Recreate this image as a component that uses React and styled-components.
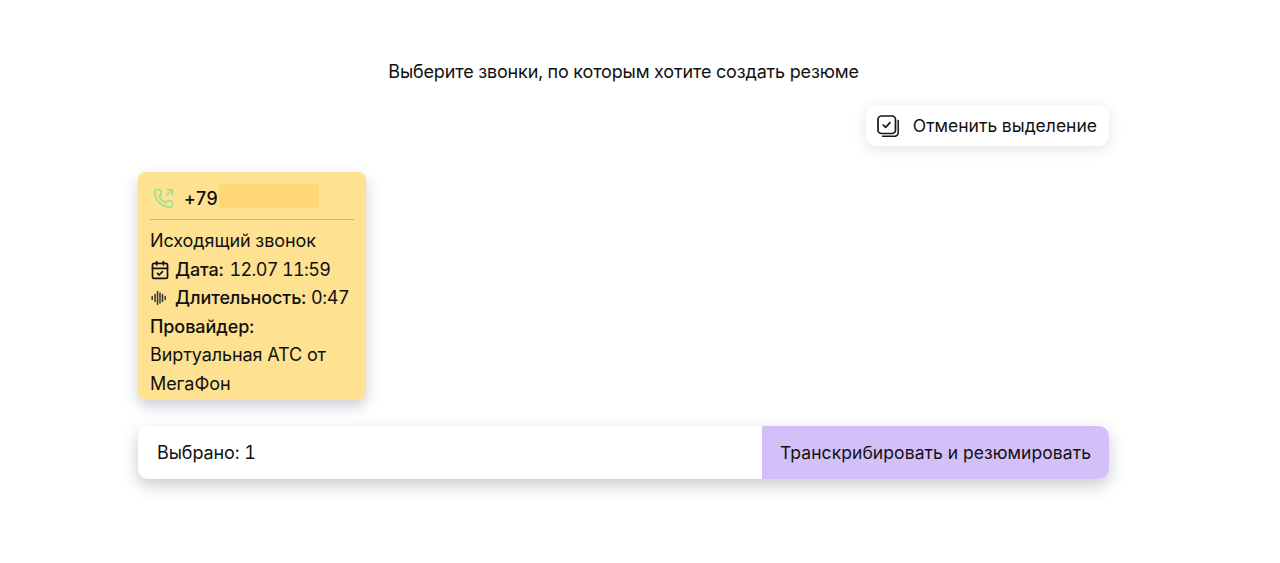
import React from 'react';
import styled, { createGlobalStyle } from 'styled-components';
import { PhoneOutgoing, CalendarCheck } from 'lucide-react';

const GlobalStyle = createGlobalStyle`
  html, body {
    margin: 0;
    background: #fff;
    color: #111;
    font-family: Inter, "Liberation Sans", sans-serif;
    font-variant-numeric: tabular-nums;
  }
`;

const Page = styled.main`
  box-sizing: border-box;
  width: 971px;
  height: 563px;
  margin-left: 138px;
  padding-top: 59px;
  display: flex;
  flex-direction: column;
`;

const Title = styled.h1`
  margin: 0;
  height: 25px;
  font-size: 18px;
  font-weight: 400;
  line-height: 25px;
  text-align: center;
  letter-spacing: -0.15px;
`;

const Toolbar = styled.div`
  display: flex;
  justify-content: flex-end;
  margin-top: 21px;
`;

const DeselectButton = styled.button`
  display: flex;
  align-items: center;
  gap: 13px;
  box-sizing: border-box;
  height: 41px;
  padding: 0 12px 0 10px;
  border: 0;
  border-radius: 10px;
  background: #fff;
  box-shadow: 0 3px 14px rgba(70, 80, 100, 0.16);
  font: inherit;
  font-size: 17.5px;
  color: inherit;
`;

const CallList = styled.section`
  display: flex;
  margin-top: 26px;
`;

const CallCard = styled.article`
  box-sizing: border-box;
  width: 228px;
  height: 228px;
  padding: 12px 12px 0;
  border-radius: 8px;
  background: #fee292;
  box-shadow: 0 6px 14px rgba(70, 80, 100, 0.28);
`;

const CardHeader = styled.header`
  display: flex;
  align-items: flex-start;
  box-sizing: border-box;
  height: 36px;
  padding-left: 3px;
  border-bottom: 1px solid rgba(120, 100, 50, 0.35);
`;

const HeaderIcon = styled.span`
  display: flex;
  padding-top: 4px;
`;

const PhoneNumber = styled.span`
  margin-left: 10px;
  padding-top: 3px;
  font-size: 18px;
  font-weight: 500;
  letter-spacing: -0.5px;
  line-height: 24px;
`;

const HiddenDigits = styled.span`
  display: block;
  width: 100px;
  height: 24px;
  margin-left: 1px;
  background: #ffd775;
`;

const CardBody = styled.div`
  margin-top: 7px;
  font-size: 18px;
  line-height: 28.6px;
  letter-spacing: -0.08px;
`;

const Line = styled.div`
  display: flex;
  align-items: center;
  white-space: pre;
`;

const LineIcon = styled.span`
  display: flex;
  width: 25px;
  flex: none;
`;

const Label = styled.b`
  font-weight: 500;
`;

const Value = styled.span`
  margin-left: 5px;
  letter-spacing: ${props => (props.$tight ? '-0.65px' : '-0.4px')};
`;

const DateValue = styled(Value)`
  margin-left: 6px;
`;

const SummaryBar = styled.div`
  display: flex;
  align-items: stretch;
  height: 53px;
  margin-top: 26px;
  border-radius: 10px;
  background: #fff;
  box-shadow: 0 6px 16px rgba(70, 80, 100, 0.3);
`;

const SelectedCount = styled.div`
  flex: 1;
  display: flex;
  align-items: center;
  padding-left: 19px;
  font-size: 18px;
  letter-spacing: -0.1px;
`;

const SubmitButton = styled.button`
  width: 347px;
  padding: 0;
  border: 0;
  border-radius: 0 10px 10px 0;
  background: #d4c0f9;
  font: inherit;
  font-size: 17.5px;
  letter-spacing: 0.08px;
  color: inherit;
`;

const StackedCheckIcon = () => (
  <svg width="24" height="24" viewBox="0 0 24 24" fill="none" stroke="#151515" strokeLinecap="round" strokeLinejoin="round">
    <rect x="2" y="2" width="17.5" height="17.5" rx="3.5" strokeWidth="1.7" />
    <path d="M7.2 11l2.4 2.3 4.4-4.6" strokeWidth="1.7" />
    <path d="M22.2 6.5v12.2a3.5 3.5 0 0 1-3.5 3.5H6.5" strokeWidth="1.5" />
  </svg>
);

const WaveIcon = () => (
  <svg width="18" height="18" viewBox="0 0 18 18" fill="none" stroke="#333" strokeWidth="1.5" strokeLinecap="round">
    <path d="M2.2 7.5v3M5 5.5v7M7.5 2.5v13M10 4v10M12.5 5.5v7M15.2 7.5v3" />
  </svg>
);

export default function App() {
  return (
    <>
      <GlobalStyle />
      <Page>
        <Title>Выберите звонки, по которым хотите создать резюме</Title>
        <Toolbar>
          <DeselectButton>
            <StackedCheckIcon />
            Отменить выделение
          </DeselectButton>
        </Toolbar>
        <CallList>
          <CallCard>
            <CardHeader>
              <HeaderIcon><PhoneOutgoing size={21} color="#9fe08e" strokeWidth={1.9} /></HeaderIcon>
              <PhoneNumber>+79</PhoneNumber>
              <HiddenDigits />
            </CardHeader>
            <CardBody>
              <Line>Исходящий звонок</Line>
              <Line>
                <LineIcon><CalendarCheck size={20} strokeWidth={2} /></LineIcon>
                <Label>Дата:</Label>
                <DateValue $tight>12.07 11:59</DateValue>
              </Line>
              <Line>
                <LineIcon><WaveIcon /></LineIcon>
                <Label>Длительность:</Label>
                <Value>0:47</Value>
              </Line>
              <Line><Label>Провайдер:</Label></Line>
              <Line>Виртуальная АТС от</Line>
              <Line>МегаФон</Line>
            </CardBody>
          </CallCard>
        </CallList>
        <SummaryBar>
          <SelectedCount>Выбрано: 1</SelectedCount>
          <SubmitButton>Транскрибировать и резюмировать</SubmitButton>
        </SummaryBar>
      </Page>
    </>
  );
}
